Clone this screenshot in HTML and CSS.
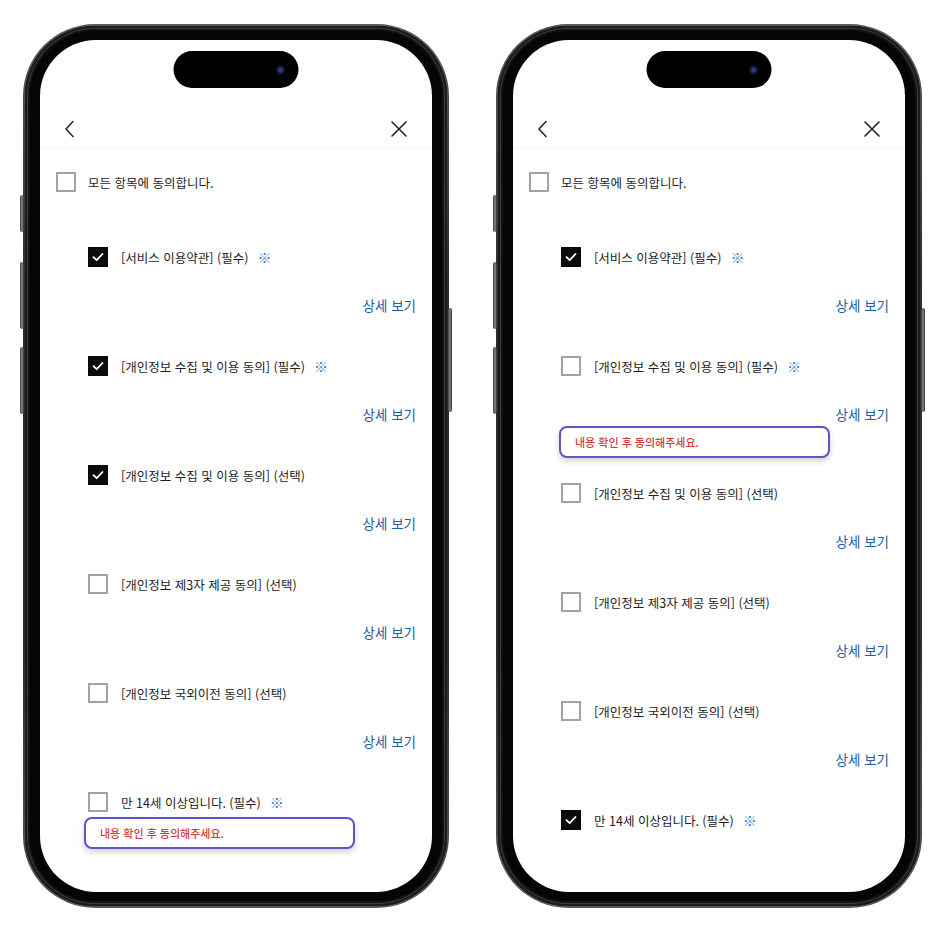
FILE: index.html
```html
<!DOCTYPE html>
<html lang="ko">
<head>
<meta charset="utf-8">
<title>약관 동의</title>
<link rel="stylesheet" href="styles.css">
</head>
<body>
<div class="stage">

  <!-- LEFT PHONE -->
  <div class="phone">
    <span class="btn btn-action"></span>
    <span class="btn btn-volup"></span>
    <span class="btn btn-voldown"></span>
    <span class="btn btn-power"></span>
    <div class="bezel">
      <div class="screen">
        <div class="island"><span class="cam"></span></div>
        <div class="header">
          <svg class="ico-back" width="20" height="20" viewBox="0 0 20 20"><path d="M13 2.5 L6 10 L13 17.5" fill="none" stroke="#222" stroke-width="1.5" stroke-linecap="round" stroke-linejoin="round"/></svg>
          <svg class="ico-close" width="20" height="20" viewBox="0 0 20 20"><path d="M3 3 L17 17 M17 3 L3 17" fill="none" stroke="#222" stroke-width="1.6" stroke-linecap="round"/></svg>
        </div>
        <div class="content">
          <div class="row row-all">
            <span class="box"></span>
            <span class="label">모든 항목에 동의합니다.</span>
          </div>
          <div class="list">
            <div class="item">
              <div class="row">
                <span class="box checked"><svg width="20" height="20" viewBox="0 0 20 20"><path d="M5.5 10.2 L8.7 13.2 L14.5 7" fill="none" stroke="#fff" stroke-width="1.8" stroke-linecap="round" stroke-linejoin="round"/></svg></span>
                <span class="label">[서비스 이용약관] (필수)</span><span class="mark">※</span>
              </div>
              <a class="detail">상세 보기</a>
            </div>
            <div class="item">
              <div class="row">
                <span class="box checked"><svg width="20" height="20" viewBox="0 0 20 20"><path d="M5.5 10.2 L8.7 13.2 L14.5 7" fill="none" stroke="#fff" stroke-width="1.8" stroke-linecap="round" stroke-linejoin="round"/></svg></span>
                <span class="label">[개인정보 수집 및 이용 동의] (필수)</span><span class="mark">※</span>
              </div>
              <a class="detail">상세 보기</a>
            </div>
            <div class="item">
              <div class="row">
                <span class="box checked"><svg width="20" height="20" viewBox="0 0 20 20"><path d="M5.5 10.2 L8.7 13.2 L14.5 7" fill="none" stroke="#fff" stroke-width="1.8" stroke-linecap="round" stroke-linejoin="round"/></svg></span>
                <span class="label">[개인정보 수집 및 이용 동의] (선택)</span>
              </div>
              <a class="detail">상세 보기</a>
            </div>
            <div class="item">
              <div class="row">
                <span class="box"></span>
                <span class="label">[개인정보 제3자 제공 동의] (선택)</span>
              </div>
              <a class="detail">상세 보기</a>
            </div>
            <div class="item">
              <div class="row">
                <span class="box"></span>
                <span class="label">[개인정보 국외이전 동의] (선택)</span>
              </div>
              <a class="detail">상세 보기</a>
            </div>
            <div class="item">
              <div class="row">
                <span class="box"></span>
                <span class="label">만 14세 이상입니다. (필수)</span><span class="mark">※</span>
              </div>
              <div class="tip tip-last">내용 확인 후 동의해주세요.</div>
            </div>
          </div>
        </div>
      </div>
    </div>
  </div>

  <!-- RIGHT PHONE -->
  <div class="phone">
    <span class="btn btn-action"></span>
    <span class="btn btn-volup"></span>
    <span class="btn btn-voldown"></span>
    <span class="btn btn-power"></span>
    <div class="bezel">
      <div class="screen">
        <div class="island"><span class="cam"></span></div>
        <div class="header">
          <svg class="ico-back" width="20" height="20" viewBox="0 0 20 20"><path d="M13 2.5 L6 10 L13 17.5" fill="none" stroke="#222" stroke-width="1.5" stroke-linecap="round" stroke-linejoin="round"/></svg>
          <svg class="ico-close" width="20" height="20" viewBox="0 0 20 20"><path d="M3 3 L17 17 M17 3 L3 17" fill="none" stroke="#222" stroke-width="1.6" stroke-linecap="round"/></svg>
        </div>
        <div class="content">
          <div class="row row-all">
            <span class="box"></span>
            <span class="label">모든 항목에 동의합니다.</span>
          </div>
          <div class="list">
            <div class="item">
              <div class="row">
                <span class="box checked"><svg width="20" height="20" viewBox="0 0 20 20"><path d="M5.5 10.2 L8.7 13.2 L14.5 7" fill="none" stroke="#fff" stroke-width="1.8" stroke-linecap="round" stroke-linejoin="round"/></svg></span>
                <span class="label">[서비스 이용약관] (필수)</span><span class="mark">※</span>
              </div>
              <a class="detail">상세 보기</a>
            </div>
            <div class="item">
              <div class="row">
                <span class="box"></span>
                <span class="label">[개인정보 수집 및 이용 동의] (필수)</span><span class="mark">※</span>
              </div>
              <a class="detail">상세 보기</a>
              <div class="tip tip-mid">내용 확인 후 동의해주세요.</div>
            </div>
            <div class="item">
              <div class="row">
                <span class="box"></span>
                <span class="label">[개인정보 수집 및 이용 동의] (선택)</span>
              </div>
              <a class="detail">상세 보기</a>
            </div>
            <div class="item">
              <div class="row">
                <span class="box"></span>
                <span class="label">[개인정보 제3자 제공 동의] (선택)</span>
              </div>
              <a class="detail">상세 보기</a>
            </div>
            <div class="item">
              <div class="row">
                <span class="box"></span>
                <span class="label">[개인정보 국외이전 동의] (선택)</span>
              </div>
              <a class="detail">상세 보기</a>
            </div>
            <div class="item">
              <div class="row">
                <span class="box checked"><svg width="20" height="20" viewBox="0 0 20 20"><path d="M5.5 10.2 L8.7 13.2 L14.5 7" fill="none" stroke="#fff" stroke-width="1.8" stroke-linecap="round" stroke-linejoin="round"/></svg></span>
                <span class="label">만 14세 이상입니다. (필수)</span><span class="mark">※</span>
              </div>
            </div>
          </div>
        </div>
      </div>
    </div>
  </div>

</div>
</body>
</html>
```

FILE: styles.css
```css
* { box-sizing: border-box; }

html, body {
  margin: 0;
  padding: 0;
  background: #fff;
}

body {
  font-family: "Noto Sans CJK KR", "Noto Sans", sans-serif;
  color: #222;
}

.stage {
  display: flex;
  gap: 47px;
  padding: 24px 0 0 23px;
}

.phone {
  position: relative;
  width: 426px;
  height: 884px;
  border-radius: 72px;
  padding: 2px;
  background: linear-gradient(180deg, #5a5a5a 0%, #2c2c2c 30%, #2c2c2c 70%, #5a5a5a 100%);
}

.bezel {
  width: 100%;
  height: 100%;
  border-radius: 70px;
  background: #050505;
  padding: 14px 15px;
  box-shadow: inset 0 0 0 2px #1c1c1c, inset 0 0 0 3px #3c3c3c, inset 0 0 0 5px #111;
}

.screen {
  position: relative;
  height: 100%;
  background: #fff;
  border-radius: 56px;
  overflow: hidden;
  padding-top: 69px;
}

.btn {
  position: absolute;
  width: 4px;
  background: linear-gradient(90deg, #3a3a3a, #8a8a8a 50%, #2a2a2a);
  border-radius: 2px;
}
.btn-action { left: -3px; top: 171px; height: 37px; }
.btn-volup { left: -3px; top: 238px; height: 67px; }
.btn-voldown { left: -3px; top: 323px; height: 67px; }
.btn-power { right: -3px; top: 284px; height: 104px; }

.island {
  position: absolute;
  top: 11px;
  left: 50%;
  transform: translateX(-50%);
  width: 125px;
  height: 37px;
  border-radius: 19px;
  background: #000;
}
.cam {
  position: absolute;
  right: 13px;
  top: 14px;
  width: 10px;
  height: 10px;
  border-radius: 50%;
  background: radial-gradient(circle at 50% 50%, #2a3a8a 0 2px, #141a38 3px, #0b0b14 5px);
}

.header {
  height: 40px;
  display: flex;
  align-items: center;
  justify-content: space-between;
  padding: 0 23px 0 20px;
  border-bottom: 1px solid #f5f5f5;
}
.header svg { display: block; }

.content {
  padding: 23px 16px 0 16px;
}

.row {
  display: flex;
  align-items: center;
  height: 20px;
}

.box {
  flex: none;
  width: 20px;
  height: 20px;
  border: 2px solid #a3a3a3;
  background: #fff;
  margin-right: 13px;
  display: flex;
  align-items: center;
  justify-content: center;
}
.box.checked {
  border: none;
  background: #0b0b0b;
}
.box svg { display: block; }

.label {
  font-size: 12.5px;
  color: #1e1e1e;
  white-space: nowrap;
}
.row-all .box { margin-right: 12px; }

.mark {
  font-size: 14px;
  color: #3478c6;
  margin-left: 9px;
}

.list {
  margin-top: 55px;
  padding-left: 32px;
}

.item {
  display: flex;
  flex-direction: column;
}
.item + .item { margin-top: 41px; }

.detail {
  align-self: flex-end;
  height: 20px;
  line-height: 20px;
  margin-top: 28px;
  font-size: 13.5px;
  color: #1f5ea3;
  white-space: nowrap;
}

.tip {
  width: 271px;
  height: 32px;
  margin-left: -4px;
  border: 2px solid #5b55c6;
  border-radius: 8px;
  background: #fff;
  box-shadow: 0 3px 6px rgba(0, 0, 0, 0.18);
  padding-left: 14px;
  display: flex;
  align-items: center;
  font-size: 11px;
  font-weight: 500;
  color: #d23b3e;
  white-space: nowrap;
}
.tip-last { margin-top: 5px; }
.tip-mid { margin-top: 2px; margin-bottom: -16px; margin-left: -2px; }
```
